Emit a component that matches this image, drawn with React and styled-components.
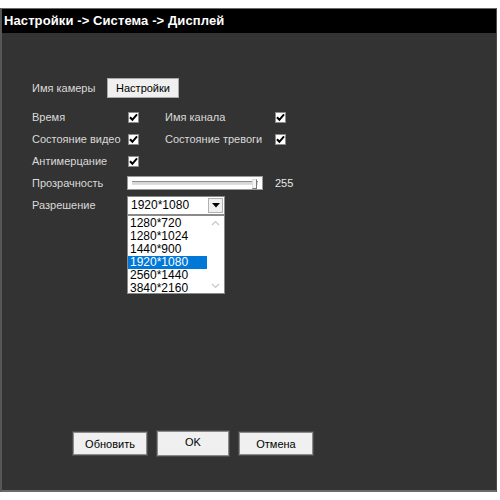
import styled, { createGlobalStyle } from "styled-components";

const GlobalStyle = createGlobalStyle`
  html, body {
    margin: 0;
    padding: 0;
    background: #ffffff;
  }
  body {
    font-family: "Liberation Sans", Arial, sans-serif;
  }
`;

const RESOLUTIONS = ["1280*720", "1280*1024", "1440*900", "1920*1080", "2560*1440", "3840*2160"];

const Check = () => (
  <CheckBox>
    <svg width="9" height="9" viewBox="0 0 9 9">
      <path d="M1 4.2 L3.4 6.8 L8 1.4" stroke="#000" strokeWidth="2" fill="none" />
    </svg>
  </CheckBox>
);

const App = () => {
  return (
    <>
      <GlobalStyle />
      <Panel>
        <Header>Настройки -&gt; Система -&gt; Дисплей</Header>
        <Body>
          <Form>
            <CameraRow>
              <Label>Имя камеры</Label>
              <SmallButton>Настройки</SmallButton>
            </CameraRow>

            <Row>
              <Label>Время</Label>
              <Check />
              <Label $second>Имя канала</Label>
              <Check />
            </Row>
            <Row>
              <Label>Состояние видео</Label>
              <Check />
              <Label $second>Состояние тревоги</Label>
              <Check />
            </Row>
            <Row>
              <Label>Антимерцание</Label>
              <Check />
            </Row>
            <Row>
              <Label>Прозрачность</Label>
              <Slider>
                <Track />
                <Thumb />
              </Slider>
              <Value>255</Value>
            </Row>
            <Row>
              <Label>Разрешение</Label>
              <SelectWrap>
                <Select>
                  <SelectText>1920*1080</SelectText>
                  <ArrowBox>
                    <svg width="8" height="5" viewBox="0 0 8 5">
                      <path d="M0 0 H8 L4 4.5 Z" fill="#000" />
                    </svg>
                  </ArrowBox>
                </Select>
                <List>
                  <Options>
                    {RESOLUTIONS.map((r) => (
                      <Option key={r} $active={r === "1920*1080"}>
                        {r}
                      </Option>
                    ))}
                  </Options>
                  <ScrollBar>
                    <svg width="9" height="6" viewBox="0 0 9 6">
                      <path d="M1 5 L4.5 1.5 L8 5" stroke="#c8c8c8" strokeWidth="1.2" fill="none" />
                    </svg>
                    <svg width="9" height="6" viewBox="0 0 9 6">
                      <path d="M1 1 L4.5 4.5 L8 1" stroke="#c8c8c8" strokeWidth="1.2" fill="none" />
                    </svg>
                  </ScrollBar>
                </List>
              </SelectWrap>
            </Row>
          </Form>

          <Buttons>
            <Button>Обновить</Button>
            <Button $tall>OK</Button>
            <Button>Отмена</Button>
          </Buttons>
        </Body>
      </Panel>
    </>
  );
};
export default App;

const Panel = styled.div`
  margin-top: 8px;
  width: 497px;
  height: 484px;
  display: flex;
  flex-direction: column;
  border-top: 1px solid #6a6a6a;
  border-left: 2px solid #575757;
  border-bottom: 2px solid #6a6a6a;
  border-right: 1px solid #4a4a4a;
  box-sizing: border-box;
`;

const Header = styled.div`
  height: 24px;
  background: #000;
  color: #fff;
  font-weight: bold;
  font-size: 13px;
  line-height: 24px;
  padding-left: 2px;
  letter-spacing: 0.1px;
`;

const Body = styled.div`
  flex: 1;
  background: #333333;
  display: flex;
  flex-direction: column;
  justify-content: space-between;
  padding: 44px 0 34px 30px;
`;

const Form = styled.div`
  display: flex;
  flex-direction: column;
`;

const CameraRow = styled.div`
  height: 21px;
  display: flex;
  align-items: center;
  margin-bottom: 8px;
`;

const Row = styled.div`
  height: 22px;
  display: flex;
  align-items: center;
`;

const Label = styled.span`
  color: #dadada;
  font-size: 11px;
  width: ${(p) => (p.$second ? "110px" : "96px")};
  margin-left: ${(p) => (p.$second ? "26px" : "0")};
  flex-shrink: 0;
  white-space: nowrap;
`;

const SmallButton = styled.div`
  margin-left: -21px;
  width: 72px;
  height: 20px;
  box-sizing: border-box;
  background: #f0f0f0;
  border: 1px solid #a9a9a9;
  font-size: 11px;
  color: #000;
  display: flex;
  align-items: center;
  justify-content: center;
`;

const CheckBox = styled.div`
  width: 11px;
  height: 11px;
  box-sizing: border-box;
  background: #fff;
  border: 1px solid #8c8c8c;
  display: flex;
  align-items: center;
  justify-content: center;
  flex-shrink: 0;
`;

const Slider = styled.div`
  position: relative;
  width: 136px;
  height: 14px;
  margin-left: -1px;
  box-sizing: border-box;
  background: #fff;
  border: 1px solid #9a9a9a;
  flex-shrink: 0;
  display: flex;
  align-items: center;
  padding: 0 4px;
`;

const Track = styled.div`
  flex: 1;
  height: 2px;
  border-top: 1px solid #909090;
  border-bottom: 1px solid #e0e0e0;
  background: #d8d8d8;
`;

const Thumb = styled.div`
  position: absolute;
  right: 5px;
  top: 2px;
  width: 3px;
  height: 8px;
  background: #f4f4f4;
  border: 1px solid #777;
  border-left-color: #ddd;
  border-top-color: #ddd;
`;

const Value = styled.span`
  color: #e8e8e8;
  font-size: 11px;
  margin-left: 12px;
`;

const SelectWrap = styled.div`
  position: relative;
  flex-shrink: 0;
  margin-left: -1px;
`;

const Select = styled.div`
  width: 98px;
  height: 19px;
  box-sizing: border-box;
  background: #fff;
  border: 1px solid #8a8a8a;
  display: flex;
  align-items: center;
  justify-content: space-between;
  padding: 0 1px 0 3px;
`;

const SelectText = styled.span`
  font-size: 12px;
  color: #000;
`;

const ArrowBox = styled.div`
  width: 15px;
  height: 15px;
  box-sizing: border-box;
  background: #f0f0f0;
  border: 1px solid #b0b0b0;
  display: flex;
  align-items: center;
  justify-content: center;
`;

const List = styled.div`
  position: absolute;
  top: 19px;
  left: 0;
  width: 98px;
  height: 79px;
  box-sizing: border-box;
  background: #fff;
  border: 1px solid #8a8a8a;
  display: flex;
`;

const Options = styled.div`
  flex: 1;
  display: flex;
  flex-direction: column;
  padding-top: 1px;
`;

const Option = styled.div`
  height: 13px;
  line-height: 13px;
  font-size: 12px;
  padding-left: 2px;
  color: ${(p) => (p.$active ? "#fff" : "#000")};
  background: ${(p) => (p.$active ? "#0078d7" : "transparent")};
`;

const ScrollBar = styled.div`
  width: 17px;
  display: flex;
  flex-direction: column;
  justify-content: space-between;
  align-items: center;
  padding: 4px 0;
  box-sizing: border-box;
`;

const Buttons = styled.div`
  display: flex;
  align-items: center;
  gap: 10px;
  padding-left: 41px;
`;

const Button = styled.div`
  width: ${(p) => (p.$tall ? "72px" : "74px")};
  height: ${(p) => (p.$tall ? "25px" : "23px")};
  box-sizing: border-box;
  background: #f0f0f0;
  border: 1px solid #8a8a8a;
  box-shadow: 0 0 0 1px #4a4a4a;
  font-size: 11px;
  color: #000;
  display: flex;
  align-items: center;
  justify-content: center;
  padding-bottom: ${(p) => (p.$tall ? "4px" : "0")};
`;
